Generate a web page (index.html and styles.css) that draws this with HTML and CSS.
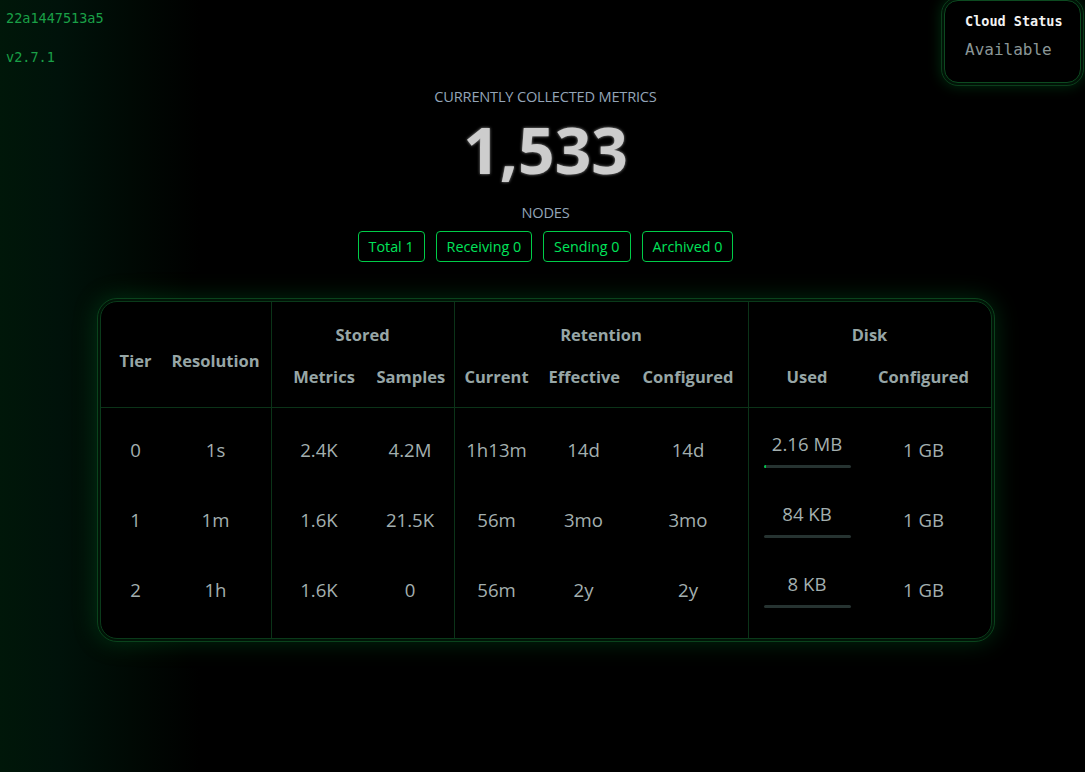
FILE: index.html
```html
<!DOCTYPE html>
<html lang="en">
<head>
<meta charset="utf-8">
<title>Metrics Dashboard</title>
<link rel="stylesheet" href="styles.css">
</head>
<body>
<header class="topbar">
  <div class="meta">
    <div class="meta-line">22a1447513a5</div>
    <div class="meta-line">v2.7.1</div>
  </div>
  <div class="cloud-ring">
    <div class="cloud">
      <div class="cloud-title">Cloud Status</div>
      <div class="cloud-value">Available</div>
    </div>
  </div>
</header>

<main class="main">
  <div class="kicker">CURRENTLY COLLECTED METRICS</div>
  <div class="big-number">1,533</div>
  <div class="kicker nodes">NODES</div>
  <div class="badges">
    <span class="badge">Total 1</span>
    <span class="badge">Receiving 0</span>
    <span class="badge">Sending 0</span>
    <span class="badge">Archived 0</span>
  </div>

  <div class="table-ring">
    <div class="table-box">
      <table class="tiers">
        <colgroup>
          <col class="w-tier"><col class="w-res">
          <col class="w-metrics"><col class="w-samples">
          <col class="w-current"><col class="w-effective"><col class="w-rconf">
          <col class="w-used"><col class="w-dconf">
        </colgroup>
        <thead>
          <tr>
            <th rowspan="2" class="span">Tier</th>
            <th rowspan="2" class="span res">Resolution</th>
            <th colspan="2" class="grp">Stored</th>
            <th colspan="3" class="grp">Retention</th>
            <th colspan="2" class="grp">Disk</th>
          </tr>
          <tr>
            <th class="grp metrics">Metrics</th>
            <th>Samples</th>
            <th class="grp">Current</th>
            <th>Effective</th>
            <th>Configured</th>
            <th class="grp">Used</th>
            <th class="cfg">Configured</th>
          </tr>
        </thead>
        <tbody>
          <tr>
            <td>0</td><td class="res">1s</td>
            <td class="grp">2.4K</td><td>4.2M</td>
            <td class="grp">1h13m</td><td>14d</td><td>14d</td>
            <td class="grp used"><div class="used-val">2.16 MB</div><div class="bar"><div class="fill" style="width:2px"></div></div></td>
            <td class="cfg">1 GB</td>
          </tr>
          <tr>
            <td>1</td><td class="res">1m</td>
            <td class="grp">1.6K</td><td>21.5K</td>
            <td class="grp">56m</td><td>3mo</td><td>3mo</td>
            <td class="grp used"><div class="used-val">84 KB</div><div class="bar"><div class="fill" style="width:0"></div></div></td>
            <td class="cfg">1 GB</td>
          </tr>
          <tr>
            <td>2</td><td class="res">1h</td>
            <td class="grp">1.6K</td><td>0</td>
            <td class="grp">56m</td><td>2y</td><td>2y</td>
            <td class="grp used"><div class="used-val">8 KB</div><div class="bar"><div class="fill" style="width:0"></div></div></td>
            <td class="cfg">1 GB</td>
          </tr>
        </tbody>
      </table>
    </div>
  </div>
</main>
</body>
</html>
```

FILE: styles.css
```css
* { box-sizing: border-box; }

html, body {
  margin: 0;
  padding: 0;
  height: 100%;
}

body {
  background: linear-gradient(to right, #001709 0px, #00120a 60px, #000904 130px, #000000 200px);
  color: #a3afaf;
  font-family: "Open Sans", "Noto Sans", sans-serif;
  min-height: 772px;
}

.topbar {
  display: flex;
  justify-content: space-between;
  align-items: flex-start;
  height: 86px;
}

.meta {
  padding: 10px 0 0 6px;
  display: flex;
  flex-direction: column;
  gap: 23px;
}

.meta-line {
  font-family: "DejaVu Sans Mono", "Liberation Mono", monospace;
  font-size: 13.5px;
  line-height: 16px;
  color: #1aa047;
}

.cloud-ring {
  margin-top: -3px;
  margin-right: 1px;
  border: 1px solid #0b3d1b;
  border-radius: 17px;
  padding: 2px;
  background: #011307;
  box-shadow: 0 0 14px rgba(0, 150, 50, 0.3);
}

.cloud {
  width: 137px;
  height: 83px;
  border: 1px solid #0c4a20;
  border-radius: 14px;
  background: #000;
  padding: 11px 0 0 20px;
  font-family: "DejaVu Sans Mono", "Liberation Mono", monospace;
}

.cloud-title {
  font-size: 13.5px;
  line-height: 18px;
  color: #f2f2f2;
  font-weight: bold;
}

.cloud-value {
  margin-top: 10px;
  font-size: 16px;
  line-height: 20px;
  color: #8a9696;
}

.main {
  display: flex;
  flex-direction: column;
  align-items: center;
  padding-left: 6px;
}

.kicker {
  font-size: 14.6px;
  line-height: 20px;
  color: #93a5b8;
  letter-spacing: -0.2px;
}

.big-number {
  margin-top: 2px;
  font-size: 64px;
  font-weight: 700;
  line-height: 84px;
  color: #cdcdcd;
  text-shadow: 0 0 3px rgba(210, 210, 210, 0.75);
}

.nodes {
  margin-top: 10px;
}

.badges {
  display: flex;
  gap: 11px;
  margin-top: 9px;
}

.badge {
  height: 31px;
  line-height: 29px;
  padding: 0 10px;
  border: 1px solid #00cc48;
  border-radius: 4px;
  color: #00e35a;
  font-size: 14.3px;
}

.table-ring {
  margin-top: 36px;
  width: 898px;
  border: 1px solid #0a431c;
  border-radius: 20px;
  padding: 2px;
  background: #011407;
  box-shadow: 0 0 24px rgba(0, 170, 60, 0.25);
}

.table-box {
  border: 1px solid #0a3a1a;
  border-radius: 17px;
  background: #000;
  overflow: hidden;
}

.tiers {
  width: 890px;
  table-layout: fixed;
  border-collapse: separate;
  border-spacing: 0;
  text-align: center;
}

.w-tier { width: 70px; }
.w-res { width: 100px; }
.w-metrics { width: 96px; }
.w-samples { width: 87px; }
.w-current { width: 85px; }
.w-effective { width: 90px; }
.w-rconf { width: 119px; }
.w-used { width: 118px; }
.w-dconf { width: 125px; }

.tiers th {
  font-size: 16.5px;
  font-weight: 700;
  color: #97a6a6;
  line-height: 22px;
  padding: 22px 10px 10px;
  white-space: nowrap;
}

.tiers thead tr:nth-child(2) th {
  padding: 10px 10px 19px;
  border-bottom: 1px solid #0b3318;
}

.tiers th.span {
  vertical-align: middle;
  padding: 13px 10px 0;
  border-bottom: 1px solid #0b3318;
}

.tiers .grp {
  border-left: 1px solid #0b3318;
}

.tiers th.res,
.tiers td.res {
  padding-left: 0;
  padding-right: 10px;
}

.tiers thead tr:nth-child(2) th.metrics {
  padding-left: 20px;
  padding-right: 10px;
}

.tiers td.cfg,
.tiers thead tr:nth-child(2) th.cfg {
  padding-right: 19px;
}

.tiers td {
  font-size: 18.6px;
  line-height: 22px;
  color: #a3afaf;
  padding: 24px 10px;
  vertical-align: middle;
  white-space: nowrap;
}

.tiers tbody tr:first-child td:not(.used) { padding-top: 31px; }
.tiers tbody tr:last-child td:not(.used) { padding-bottom: 37px; }

.tiers td.used {
  padding: 0 10px;
}
.tiers tbody tr:first-child td.used { padding-top: 7px; }
.tiers tbody tr:last-child td.used { padding-bottom: 13px; }

.used-val {
  line-height: 22px;
}

.bar {
  margin: 10px auto 0;
  width: 87px;
  height: 3px;
  border-radius: 2px;
  background: #263331;
  overflow: hidden;
}

.fill {
  height: 100%;
  background: #00c24a;
}
```
